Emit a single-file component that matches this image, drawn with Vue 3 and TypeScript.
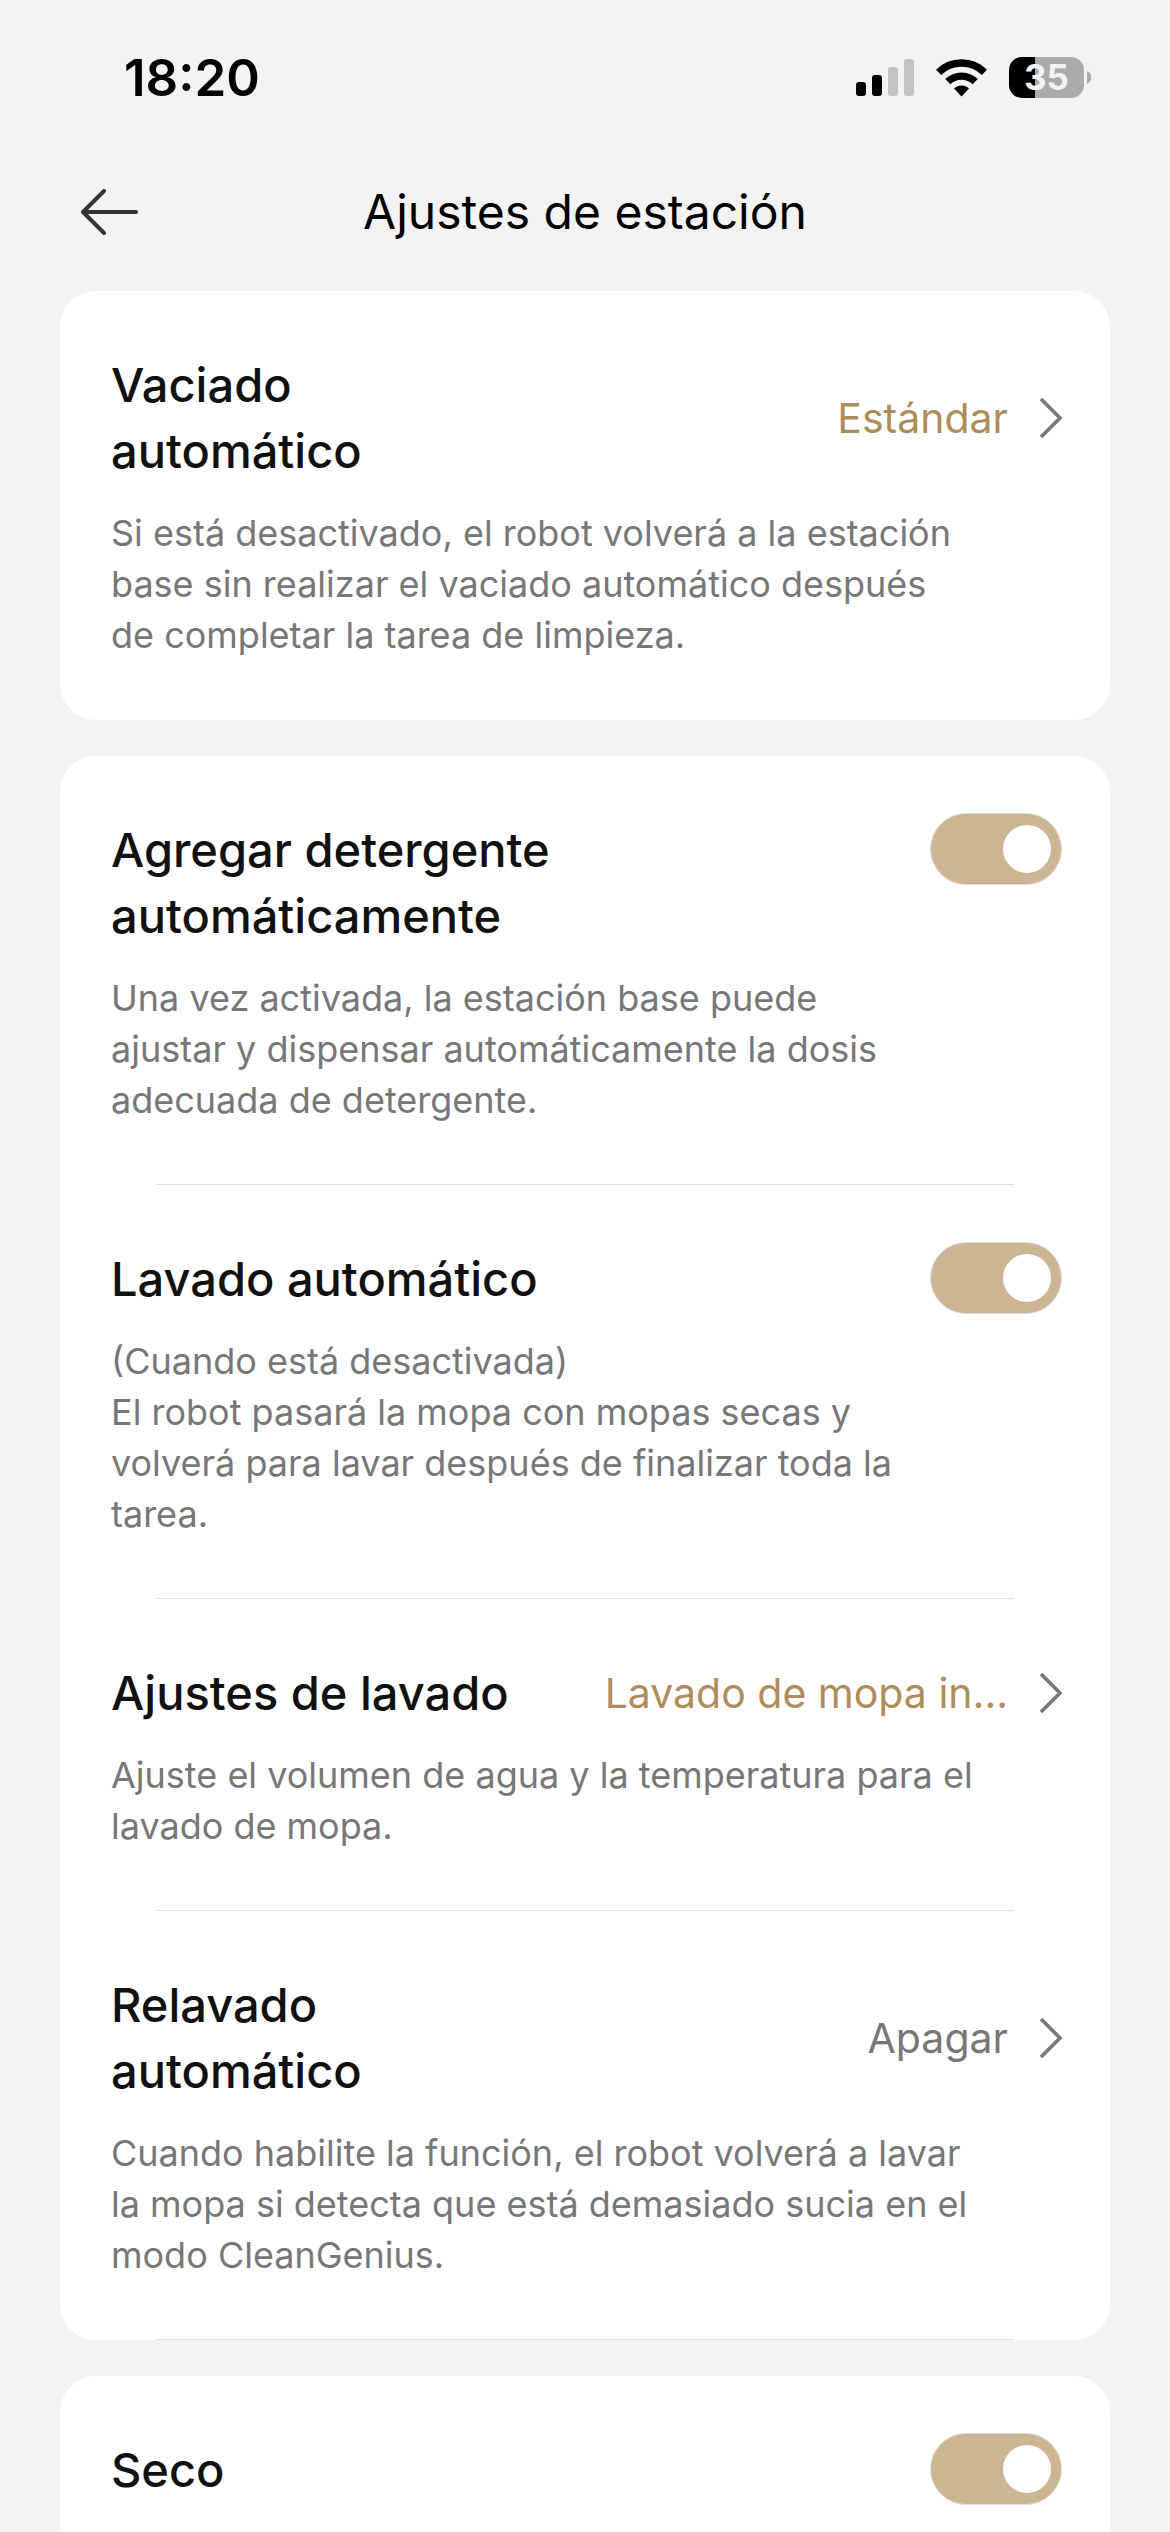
<script setup lang="ts">
import { reactive } from 'vue'

interface Setting {
  id: string
  title: string
  kind: 'link' | 'switch'
  description?: string
  value?: string
  muted?: boolean
  on?: boolean
  divider?: boolean
}

const groups = reactive<Setting[][]>([
  [
    {
      id: 'vaciado',
      title: 'Vaciado automático',
      kind: 'link',
      value: 'Estándar',
      description:
        'Si está desactivado, el robot volverá a la estación base sin realizar el vaciado automático después de completar la tarea de limpieza.',
    },
  ],
  [
    {
      id: 'detergente',
      title: 'Agregar detergente automáticamente',
      kind: 'switch',
      on: true,
      divider: true,
      description:
        'Una vez activada, la estación base puede ajustar y dispensar automáticamente la dosis adecuada de detergente.',
    },
    {
      id: 'lavado',
      title: 'Lavado automático',
      kind: 'switch',
      on: true,
      divider: true,
      description:
        '(Cuando está desactivada)\nEl robot pasará la mopa con mopas secas y volverá para lavar después de finalizar toda la tarea.',
    },
    {
      id: 'ajustes-lavado',
      title: 'Ajustes de lavado',
      kind: 'link',
      value: 'Lavado de mopa in...',
      divider: true,
      description: 'Ajuste el volumen de agua y la temperatura para el lavado de mopa.',
    },
    {
      id: 'relavado',
      title: 'Relavado automático',
      kind: 'link',
      value: 'Apagar',
      muted: true,
      divider: true,
      description:
        'Cuando habilite la función, el robot volverá a lavar la mopa si detecta que está demasiado sucia en el modo CleanGenius.',
    },
  ],
  [{ id: 'seco', title: 'Seco', kind: 'switch', on: true }],
])
</script>

<template>
  <div class="page">
    <div class="status">
      <span class="time">18:20</span>
      <div class="indicators">
        <svg class="signal" width="58" height="38" viewBox="0 0 58 38" aria-hidden="true">
          <rect x="0" y="23" width="10" height="14" rx="3" />
          <rect x="16" y="16" width="10" height="21" rx="3" />
          <rect x="32" y="8" width="10" height="29" rx="3" fill="#c3c3c3" />
          <rect x="48" y="0" width="10" height="37" rx="3" fill="#c3c3c3" />
        </svg>
        <svg class="wifi" width="51" height="38" viewBox="0 0 51 38" aria-hidden="true">
          <path d="M2.6 13.3A33 33 0 0 1 48.4 13.3" fill="none" stroke="#000" stroke-width="7.4" />
          <path d="M11.8 22.7A19.6 19.6 0 0 1 39.2 22.7" fill="none" stroke="#000" stroke-width="7.4" />
          <path d="M25.5 37.4L18 29.6A10.6 10.6 0 0 1 33 29.6Z" />
        </svg>
        <div class="battery">
          <div class="cell"><span>35</span></div>
          <svg width="4" height="13" viewBox="0 0 4 13" aria-hidden="true">
            <path d="M0 0A7 7 0 0 1 0 13Z" fill="#ababab" />
          </svg>
        </div>
      </div>
    </div>

    <header class="nav">
      <button class="back" type="button" aria-label="Atrás">
        <svg width="60" height="46" viewBox="0 0 60 46" aria-hidden="true">
          <path d="M25 2L4 23L25 44M4 23L57 23" fill="none" stroke="#333" stroke-width="4" stroke-linecap="round" stroke-linejoin="round" />
        </svg>
      </button>
      <h1>Ajustes de estación</h1>
    </header>

    <main>
      <section v-for="(group, g) in groups" :key="g" class="card">
        <template v-for="s in group" :key="s.id">
          <a v-if="s.kind === 'link'" class="row link" :href="'#' + s.id">
            <span class="head">
              <span class="title">{{ s.title }}</span>
              <span class="value" :class="{ muted: s.muted }">{{ s.value }}</span>
              <svg class="chevron" width="22" height="40" viewBox="0 0 22 40" aria-hidden="true">
                <path d="M1 1L20 20L1 39" fill="none" stroke="#777" stroke-width="3.600" />
              </svg>
            </span>
            <span class="desc">{{ s.description }}</span>
          </a>
          <div v-else class="row switch">
            <div class="body">
              <label class="title" :for="s.id">{{ s.title }}</label>
              <p v-if="s.description" class="desc">{{ s.description }}</p>
            </div>
            <input :id="s.id" v-model="s.on" class="toggle" type="checkbox" role="switch" />
          </div>
          <hr class="divider" :class="{ hidden: !s.divider }" />
        </template>
      </section>
    </main>
  </div>
</template>

<style>
body {
  background: #f3f3f3;
}
</style>

<style scoped>
.page {
  display: flex;
  flex-direction: column;
  height: 100vh;
  background: #f3f3f3;
  color: #111;
  font-family: Inter, 'Liberation Sans', sans-serif;
}

.status {
  display: flex;
  flex: none;
  align-items: center;
  justify-content: space-between;
  box-sizing: border-box;
  height: 133px;
  padding: 22px 79px 0 124px;
  color: #000;
}

.time {
  font-size: 51px;
  line-height: 60px;
  font-weight: 600;
}

.indicators {
  display: flex;
  align-items: center;
  gap: 22px;
}

.battery {
  display: flex;
  align-items: center;
  gap: 3px;
}

.cell {
  width: 75px;
  border-radius: 13px;
  background: linear-gradient(90deg, #000 35%, #ababab 35%);
  color: #f3f3f3;
  font-size: 35px;
  line-height: 41px;
  font-weight: 700;
  text-align: center;
}

.nav {
  display: grid;
  flex: none;
  grid-template-columns: 1fr auto 1fr;
  align-items: center;
  height: 158px;
  padding: 0 79px;
  color: #000;
}

.back {
  display: flex;
  justify-self: start;
  padding: 0;
  border: 0;
  background: none;
}

h1 {
  margin: 0;
  font-size: 48px;
  line-height: 60px;
  font-weight: 400;
}

main {
  display: flex;
  flex: 1;
  flex-direction: column;
  gap: 36px;
  min-height: 0;
  padding: 0 60px;
  overflow-y: auto;
  scrollbar-width: none;
}

.card {
  flex: none;
  border-radius: 36px;
  background: #fff;
}

.row {
  padding: 57px 48px 58px 51px;
}

.link {
  display: block;
  color: inherit;
  text-decoration: none;
}

.head {
  display: flex;
  align-items: center;
  padding-top: 4px;
}

.title {
  display: block;
  font-size: 47px;
  line-height: 66px;
  font-weight: 500;
}

.link .title {
  flex: none;
  width: 43%;
}

.value {
  flex: 1;
  color: #ae8d5c;
  font-size: 41px;
  line-height: 60px;
  text-align: right;
  white-space: nowrap;
}

.value.muted {
  color: #777;
}

.chevron {
  flex: none;
  margin-left: 32px;
}

.desc {
  display: block;
  margin: 24px 0 0;
  color: #777;
  font-size: 36px;
  line-height: 51px;
  white-space: pre-line;
}

.link .desc {
  max-width: 91%;
}

.switch {
  display: flex;
  align-items: flex-start;
  justify-content: space-between;
  gap: 24px;
}

.body {
  flex: 1;
  padding-top: 4px;
}

.toggle {
  flex: none;
  box-sizing: border-box;
  width: 132px;
  height: 72px;
  margin: 0;
  padding: 11px 10px;
  border: 1px solid #ddd;
  border-radius: 36px;
  background: #e5e5e5;
  appearance: none;
}

.toggle::before {
  content: '';
  display: block;
  width: 48px;
  height: 48px;
  border-radius: 50%;
  background: #fff;
}

.toggle:checked {
  background: #cbb592;
}

.toggle:checked::before {
  margin-left: auto;
}

.divider {
  height: 1px;
  margin: 0 96px;
  border: 0;
  background: #e1e1e1;
}

.divider.hidden {
  background: none;
}
</style>
